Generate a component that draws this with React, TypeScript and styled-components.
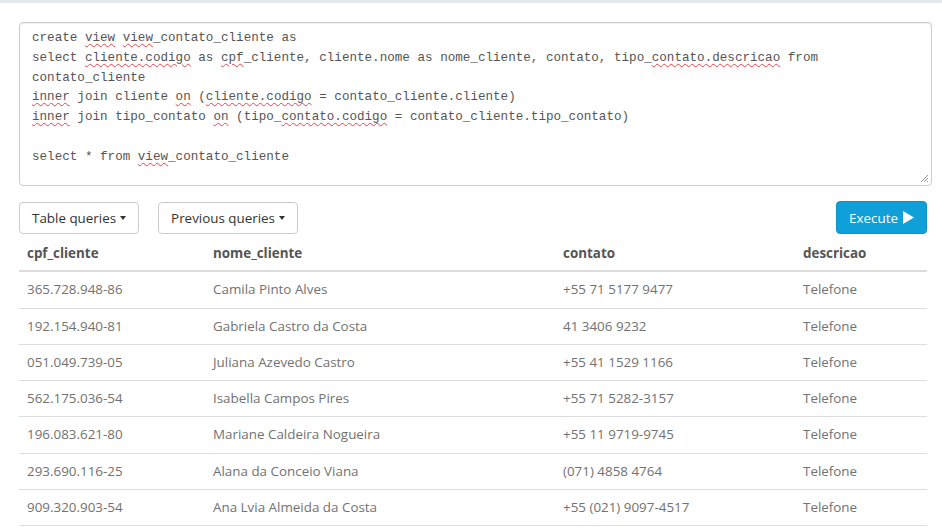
import React from 'react';
import styled, { createGlobalStyle } from 'styled-components';

const Global = createGlobalStyle`
  html, body { margin: 0; padding: 0; background: #ffffff; }
  body { font-family: "Open Sans", "Noto Sans", sans-serif; font-size: 13.4px; color: #555; }
`;

const TopStrip = styled.div`
  height: 3px;
  background: #e4e9ef;
`;

const Main = styled.main`
  padding: 19px 15px 0 19px;
`;

const Editor = styled.div`
  position: relative;
  box-sizing: border-box;
  height: 164px;
  margin-right: -5px;
  padding: 6px 12px 4px;
  border: 1px solid #cccccc;
  border-radius: 4px;
  box-shadow: inset 0 1px 1px rgba(0, 0, 0, 0.075);
  font-family: "Liberation Mono", "DejaVu Sans Mono", monospace;
  font-size: 12.6px;
  line-height: 19.83px;
  color: #555555;
  white-space: pre-wrap;
  overflow: hidden;
`;

const Miss = styled.span`
  text-decoration: underline wavy #e8434b;
  text-decoration-thickness: 1px;
  text-underline-offset: 2px;
`;

const Grip = styled.svg`
  position: absolute;
  right: 2px;
  bottom: 2px;
`;

const Toolbar = styled.div`
  display: flex;
  align-items: center;
  gap: 19px;
  margin-top: 15px;
`;

const DropButton = styled.button`
  display: inline-flex;
  align-items: center;
  gap: 4px;
  box-sizing: border-box;
  height: 32px;
  padding: 0 12px;
  background: #ffffff;
  border: 1px solid #cccccc;
  border-radius: 4px;
  font-family: inherit;
  font-size: 13.4px;
  color: #333333;
`;

const Caret = styled.span`
  display: inline-block;
  width: 0;
  height: 0;
  border-left: 3.5px solid transparent;
  border-right: 3.5px solid transparent;
  border-top: 4px solid #333333;
  margin-top: 1px;
`;

const ExecuteButton = styled.button`
  display: inline-flex;
  align-items: center;
  gap: 5px;
  margin-left: auto;
  box-sizing: border-box;
  height: 33px;
  padding: 0 12px;
  background: #0fa0d9;
  border: 1px solid #0c92c8;
  border-radius: 4px;
  font-family: inherit;
  font-size: 13.4px;
  color: #ffffff;
`;

const Table = styled.table`
  width: 100%;
  table-layout: fixed;
  border-collapse: collapse;
  margin-top: 1px;
`;

const Th = styled.th<{ $w?: number }>`
  text-align: left;
  padding: 9px 8px 7px;
  width: ${(p) => (p.$w ? `${p.$w}px` : 'auto')};
  font-weight: 700;
  color: #555555;
  line-height: 19.3px;
  border-bottom: 2px solid #dddddd;
`;

const Td = styled.td`
  padding: 8px;
  line-height: 19.3px;
  color: #727272;
  border-top: 1px solid #dddddd;
  border-bottom: 1px solid #dddddd;
`;

const rows = [
  ['365.728.948-86', 'Camila Pinto Alves', '+55 71 5177 9477', 'Telefone'],
  ['192.154.940-81', 'Gabriela Castro da Costa', '41 3406 9232', 'Telefone'],
  ['051.049.739-05', 'Juliana Azevedo Castro', '+55 41 1529 1166', 'Telefone'],
  ['562.175.036-54', 'Isabella Campos Pires', '+55 71 5282-3157', 'Telefone'],
  ['196.083.621-80', 'Mariane Caldeira Nogueira', '+55 11 9719-9745', 'Telefone'],
  ['293.690.116-25', 'Alana da Conceio Viana', '(071) 4858 4764', 'Telefone'],
  ['909.320.903-54', 'Ana Lvia Almeida da Costa', '+55 (021) 9097-4517', 'Telefone'],
];

export default function App() {
  return (
    <>
      <Global />
      <TopStrip />
      <Main>
        <Editor role="textbox" aria-multiline="true">
          {'create '}<Miss>view</Miss>{' '}<Miss>view</Miss>{'_contato_cliente as\n'}
          {'select '}<Miss>cliente.codigo</Miss>{' as '}<Miss>cpf</Miss>{'_cliente, cliente.nome as nome_cliente, contato, tipo_'}<Miss>contato.descricao</Miss>{' from contato_cliente\n'}
          <Miss>inner</Miss>{' join cliente '}<Miss>on</Miss>{' ('}<Miss>cliente.codigo</Miss>{' = contato_cliente.cliente)\n'}
          <Miss>inner</Miss>{' join tipo_contato '}<Miss>on</Miss>{' (tipo_'}<Miss>contato.codigo</Miss>{' = contato_cliente.tipo_contato)\n'}
          {'\n'}
          {'select * from '}<Miss>view</Miss>{'_contato_cliente'}
          <Grip width="10" height="10" viewBox="0 0 10 10">
            <path d="M9 2 L2 9 M9 5 L5 9 M9 8 L8 9" stroke="#999" strokeWidth="1" />
          </Grip>
        </Editor>
        <Toolbar>
          <DropButton>Table queries <Caret /></DropButton>
          <DropButton>Previous queries <Caret /></DropButton>
          <ExecuteButton>
            Execute
            <svg width="11" height="13" viewBox="0 0 11 13">
              <path d="M0 0 L11 6.5 L0 13 Z" fill="#ffffff" />
            </svg>
          </ExecuteButton>
        </Toolbar>
        <Table>
          <thead>
            <tr>
              <Th $w={170}>cpf_cliente</Th>
              <Th $w={334}>nome_cliente</Th>
              <Th $w={224}>contato</Th>
              <Th>descricao</Th>
            </tr>
          </thead>
          <tbody>
            {rows.map((r) => (
              <tr key={r[0]}>
                {r.map((c, i) => (
                  <Td key={i}>{c}</Td>
                ))}
              </tr>
            ))}
          </tbody>
        </Table>
      </Main>
    </>
  );
}
